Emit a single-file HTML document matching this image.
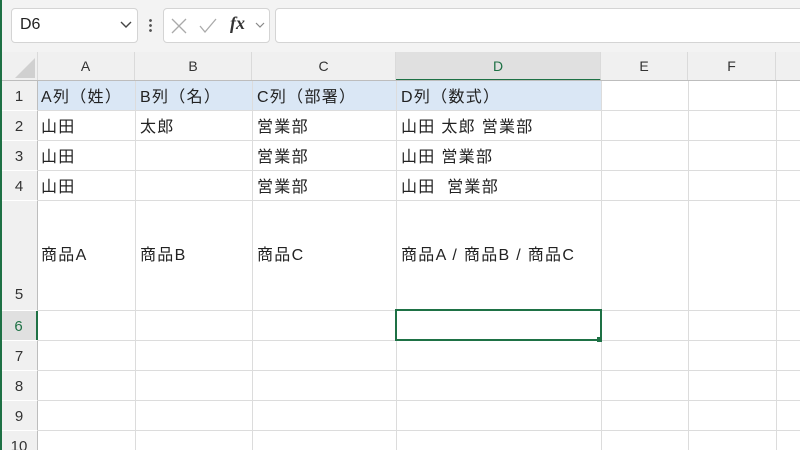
<!DOCTYPE html><html><head><meta charset="utf-8"><style>
body{margin:0;width:800px;height:450px;overflow:hidden;background:#fff;font-family:"Liberation Sans","Noto Sans CJK JP",sans-serif;position:relative}
.a{position:absolute}
.tb{left:0;top:0;width:800px;height:52px;background:#f3f3f3}
.box{background:#fff;border:1px solid #d4d4d4;border-radius:4px;height:33px;top:8px}
.hdr{top:52px;height:28px;background:#f0f0f0;border-bottom:1px solid #bdbdbd;left:0;width:800px}
.ch{top:52px;height:28px;line-height:28px;text-align:center;font-size:14px;color:#333;border-right:1px solid #dadada}
.rh{left:1px;width:36px;background:#f0f0f0;border-right:1px solid #bdbdbd;text-align:center;font-size:15px;color:#333}
.vl{top:80px;width:1px;height:370px;background:#dcdcdc}
.hl{left:37px;width:763px;height:1px;background:#dcdcdc}
.t{font-size:16px;letter-spacing:1.3px;color:#222;white-space:pre;margin-top:-2px}
</style></head><body>
<div class="a tb"></div>
<div class="a" style="left:0;top:0;width:2px;height:450px;background:#1e7145;z-index:5"></div>
<div class="a box" style="left:11px;width:125px"><span class="a" style="left:8px;top:7px;font-size:16px;color:#222">D6</span><svg class="a" style="left:108px;top:12px" width="12" height="8"><path d="M1 1l5 5 5-5" fill="none" stroke="#444" stroke-width="1.4"/></svg></div>
<div class="a" style="left:149px;top:18px;width:3px;height:14px;background:radial-gradient(circle,#555 1.2px,transparent 1.6px) 0 0/3px 5px"></div>
<div class="a box" style="left:163px;width:105px">
<svg class="a" style="left:6px;top:8px" width="18" height="18"><path d="M2 2l14 14M16 2L2 16" stroke="#aaa" stroke-width="1.3"/></svg>
<svg class="a" style="left:34px;top:8px" width="20" height="18"><path d="M2 9l5 6L18 2" fill="none" stroke="#aaa" stroke-width="1.3"/></svg>
<span class="a" style="left:66px;top:4px;font:italic bold 18px 'Liberation Serif',serif;color:#333">fx</span>
<svg class="a" style="left:91px;top:13px" width="10" height="7"><path d="M1 1l4 4 4-4" fill="none" stroke="#888" stroke-width="1.2"/></svg></div>
<div class="a box" style="left:275px;width:540px"></div>
<div class="a hdr"></div>
<div class="a" style="left:1px;top:52px;width:36px;height:28px;border-right:1px solid #dadada"><div class="a" style="right:2px;bottom:2px;width:0;height:0;border-left:20px solid transparent;border-bottom:20px solid #d0d0d0"></div></div>
<div class="a ch" style="left:37px;width:97px">A</div>
<div class="a ch" style="left:135px;width:116px">B</div>
<div class="a ch" style="left:252px;width:143px">C</div>
<div class="a ch" style="left:396px;width:204px;background:#e0e0e0;color:#1e7145;border-bottom:2px solid #1e7145;height:27px">D</div>
<div class="a ch" style="left:601px;width:86px">E</div>
<div class="a ch" style="left:688px;width:87px">F</div>
<div class="a" style="left:37px;top:81px;width:564px;height:29px;background:#dae7f5"></div>
<div class="a rh" style="top:81px;height:29px;line-height:32px">1</div>
<div class="a rh" style="top:111px;height:29px;line-height:32px">2</div>
<div class="a rh" style="top:141px;height:29px;line-height:32px">3</div>
<div class="a rh" style="top:171px;height:29px;line-height:32px">4</div>
<div class="a rh" style="top:201px;height:109px;line-height:188px">5</div>
<div class="a rh" style="top:311px;height:29px;line-height:32px;background:#e0e0e0;color:#1e7145;border-right:2px solid #1e7145;width:35px">6</div>
<div class="a rh" style="top:341px;height:29px;line-height:32px">7</div>
<div class="a rh" style="top:371px;height:29px;line-height:32px">8</div>
<div class="a rh" style="top:401px;height:29px;line-height:32px">9</div>
<div class="a rh" style="top:431px;height:19px;line-height:32px;overflow:hidden">10</div>
<div class="a vl" style="left:135px"></div><div class="a vl" style="left:252px"></div><div class="a vl" style="left:396px"></div><div class="a vl" style="left:601px"></div><div class="a vl" style="left:688px"></div><div class="a vl" style="left:776px"></div>
<div class="a hl" style="top:110px"></div><div class="a hl" style="top:140px"></div><div class="a hl" style="top:170px"></div><div class="a hl" style="top:200px"></div><div class="a hl" style="top:310px"></div><div class="a hl" style="top:340px"></div><div class="a hl" style="top:370px"></div><div class="a hl" style="top:400px"></div><div class="a hl" style="top:430px"></div>
<div class="a" style="left:0;top:80px;width:800px;height:1px;background:#bdbdbd"></div>
<div class="a t" style="left:41px;top:85px">A列（姓）</div>
<div class="a t" style="left:140px;top:85px">B列（名）</div>
<div class="a t" style="left:257px;top:85px">C列（部署）</div>
<div class="a t" style="left:401px;top:85px">D列（数式）</div>
<div class="a t" style="left:41px;top:115px">山田</div>
<div class="a t" style="left:140px;top:115px">太郎</div>
<div class="a t" style="left:257px;top:115px">営業部</div>
<div class="a t" style="left:401px;top:115px">山田 太郎 営業部</div>
<div class="a t" style="left:41px;top:145px">山田</div>
<div class="a t" style="left:257px;top:145px">営業部</div>
<div class="a t" style="left:401px;top:145px">山田 営業部</div>
<div class="a t" style="left:41px;top:175px">山田</div>
<div class="a t" style="left:257px;top:175px">営業部</div>
<div class="a t" style="left:401px;top:175px">山田  営業部</div>
<div class="a t" style="left:41px;top:243px">商品A</div>
<div class="a t" style="left:140px;top:243px">商品B</div>
<div class="a t" style="left:257px;top:243px">商品C</div>
<div class="a t" style="left:401px;top:243px">商品A / 商品B / 商品C</div>
<div class="a" style="left:395px;top:309px;width:203px;height:28px;border:2px solid #1e7145"></div>
<div class="a" style="left:597px;top:337px;width:5px;height:5px;background:#1e7145"></div>
</body></html>
